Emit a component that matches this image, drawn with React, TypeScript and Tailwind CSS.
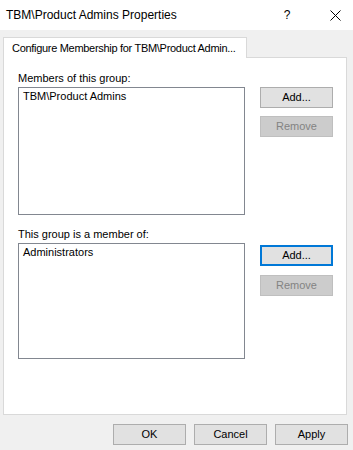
const ui = { fontFamily: '"Liberation Sans", Arial, sans-serif' };

const Button = ({
  label,
  disabled,
  focused,
}: {
  label: string;
  disabled?: boolean;
  focused?: boolean;
}) => {
  if (disabled)
    return (
      <div className="flex h-[21px] w-[73px] items-center justify-center border border-[#bfbfbf] bg-[#cccccc] text-[11px] text-[#838383]">
        {label}
      </div>
    );
  return (
    <div
      className={
        focused
          ? "flex h-[21px] w-[73px] items-center justify-center border-2 border-[#0078d7] bg-[#e1e1e1] text-[11px] text-black"
          : "flex h-[21px] w-[73px] items-center justify-center border border-[#adadad] bg-[#e1e1e1] text-[11px] text-black"
      }
    >
      {label}
    </div>
  );
};

const GroupList = ({
  title,
  item,
  height,
  focusAdd,
}: {
  title: string;
  item: string;
  height: string;
  focusAdd?: boolean;
}) => (
  <div className="flex flex-col">
    <div className="h-[17px] text-[11px] leading-[17px] text-black">{title}</div>
    <div className="flex gap-[15px]">
      <div className={`${height} w-[227px] border border-[#828790] bg-white px-[4px] pt-px text-[11px] leading-[14px] text-black`}>
        {item}
      </div>
      <div className={focusAdd ? "flex flex-col gap-[9px] pt-[2px]" : "flex flex-col gap-[8px]"}>
        <Button label="Add..." focused={focusAdd} />
        <Button label="Remove" disabled />
      </div>
    </div>
  </div>
);

export default function App() {
  return (
    <div className="flex h-[450px] w-[353px] flex-col bg-[#f0f0f0]" style={ui}>
      {/* title bar */}
      <div className="flex h-[30px] items-center bg-white pl-[6px] text-[12px] text-black">
        <span className="flex-1">TBM\Product Admins Properties</span>
        <span className="w-[20px] text-center">?</span>
        <span className="ml-[32px] mr-[12px] flex w-[12px] justify-center">
          <svg width="11" height="11" viewBox="0 0 11 11">
            <path d="M0.5 0.5 L10.5 10.5 M10.5 0.5 L0.5 10.5" stroke="#000" strokeWidth="1" />
          </svg>
        </span>
      </div>

      <div className="px-[3px] pt-[7px]">
        <div className="relative z-10 -mb-px flex h-[21px] w-[244px] items-center overflow-hidden whitespace-nowrap border border-b-0 border-[#d9d9d9] bg-white pl-[8px] text-[11px] tracking-[-0.3px] text-black">
          Configure Membership for TBM\Product Admin...
        </div>
        <div className="flex h-[358px] w-[344px] flex-col gap-[11px] border border-[#d9d9d9] bg-white pl-[14px] pt-[12px]">
          <GroupList title="Members of this group:" item="TBM\Product Admins" height="h-[128px]" />
          <GroupList title="This group is a member of:" item="Administrators" height="h-[116px]" focusAdd />
        </div>
      </div>

      <div className="flex justify-end gap-[8px] pr-[5px] pt-[9px]">
        <Button label="OK" />
        <Button label="Cancel" />
        <Button label="Apply" />
      </div>
    </div>
  );
}
